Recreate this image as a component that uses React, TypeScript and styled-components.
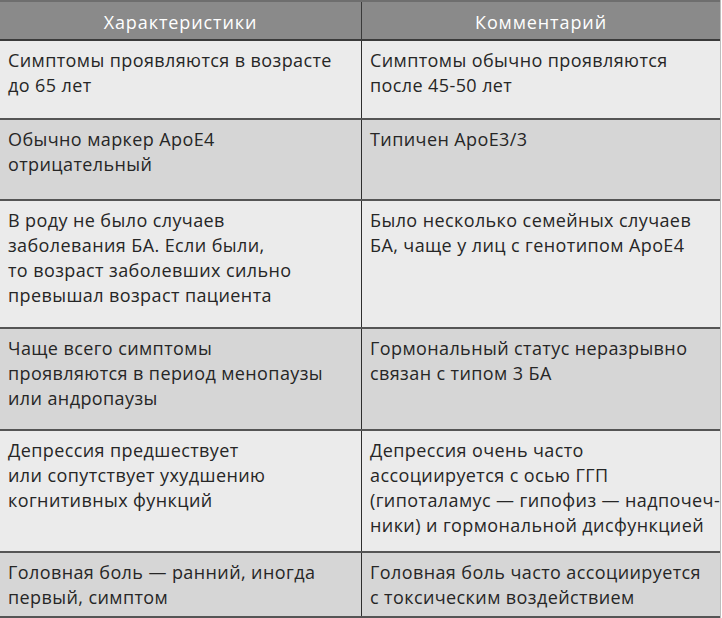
import styled, { createGlobalStyle } from 'styled-components';

type RowProps = {
  $shaded: boolean;
  $height: number;
};

interface Entry {
  trait: string[];
  comment: string[];
  height: number;
}

const GlobalStyle = createGlobalStyle`
  html, body {
    margin: 0;
    padding: 0;
    background: #ffffff;
  }
  body {
    font-family: 'Open Sans', 'Liberation Sans', sans-serif;
  }
`;

const rows: Entry[] = [
  {
    trait: ['Симптомы проявляются в возрасте', 'до 65 лет'],
    comment: ['Симптомы обычно проявляются', 'после 45-50 лет'],
    height: 79,
  },
  {
    trait: ['Обычно маркер ApoE4', 'отрицательный'],
    comment: ['Типичен ApoE3/3'],
    height: 81,
  },
  {
    trait: [
      'В роду не было случаев',
      'заболевания БА. Если были,',
      'то возраст заболевших сильно',
      'превышал возраст пациента',
    ],
    comment: ['Было несколько семейных случаев', 'БА, чаще у лиц с генотипом ApoE4'],
    height: 128,
  },
  {
    trait: ['Чаще всего симптомы', 'проявляются в период менопаузы', 'или андропаузы'],
    comment: ['Гормональный статус неразрывно', 'связан с типом 3 БА'],
    height: 102,
  },
  {
    trait: ['Депрессия предшествует', 'или сопутствует ухудшению', 'когнитивных функций'],
    comment: [
      'Депрессия очень часто',
      'ассоциируется с осью ГГП',
      '(гипоталамус — гипофиз — надпочеч-',
      'ники) и гормональной дисфункцией',
    ],
    height: 122,
  },
  {
    trait: ['Головная боль — ранний, иногда', 'первый, симптом'],
    comment: ['Головная боль часто ассоциируется', 'с токсическим воздействием'],
    height: 65,
  },
];

const App = (): JSX.Element => {
  return (
    <>
      <GlobalStyle />
      <Table>
        <HeadRow>
          <HeadCell>Характеристики</HeadCell>
          <HeadCell>Комментарий</HeadCell>
        </HeadRow>

        {rows.map((row, i) => (
          <Row key={row.trait[0]} $shaded={i % 2 === 1} $height={row.height}>
            <Cell>
              {row.trait.map(line => (
                <Line key={line}>{line}</Line>
              ))}
            </Cell>
            <Cell>
              {row.comment.map(line => (
                <Line key={line}>{line}</Line>
              ))}
            </Cell>
          </Row>
        ))}
      </Table>
    </>
  );
};

export default App;

const Table = styled.div`
  width: 721px;
  display: flex;
  flex-direction: column;
  border-right: 1px solid #bdbdbd;
  box-sizing: border-box;
`;

const HeadRow = styled.div`
  display: grid;
  grid-template-columns: 361px 1fr;
  height: 41px;
  box-sizing: border-box;
  background: #8a8a8a;
  border-top: 2px solid #6e6e6e;
  border-bottom: 2px solid #3a3a3a;
`;

const HeadCell = styled.div`
  display: flex;
  align-items: center;
  justify-content: center;
  padding-top: 2px;
  color: #ffffff;
  font-size: 18px;
  font-weight: 500;
  letter-spacing: 0.9px;

  & + & {
    border-left: 1px solid #3a3a3a;
  }
`;

const Row = styled.div<RowProps>`
  display: grid;
  grid-template-columns: 361px 1fr;
  height: ${props => props.$height}px;
  box-sizing: border-box;
  background: ${props => (props.$shaded ? '#d6d6d6' : '#ebebeb')};
  border-bottom: 2px solid #555555;
`;

const Cell = styled.div`
  padding: 7px 6px 0 8px;
  color: #262626;
  font-size: 18px;
  line-height: 25px;
  letter-spacing: 0.4px;
  overflow: hidden;

  & + & {
    border-left: 1px solid #2e2e2e;
  }
`;

const Line = styled.div`
  white-space: nowrap;
`;
